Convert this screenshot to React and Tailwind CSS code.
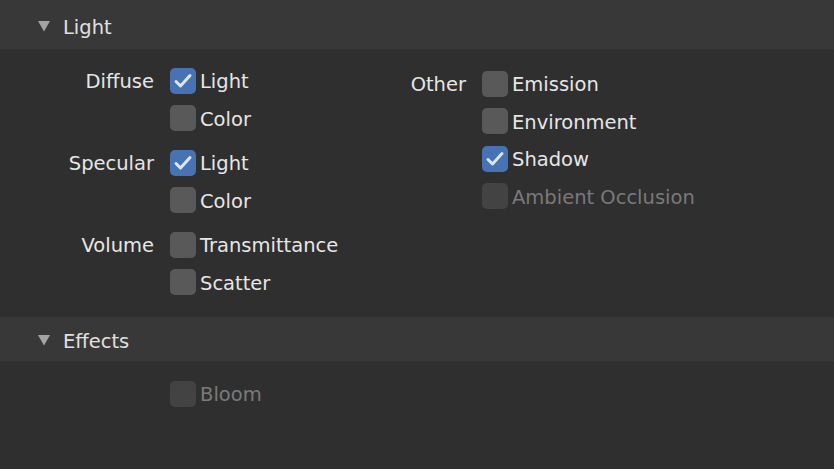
import React from "react";

function Check({ state }) {
    // state: "on" | "off" | "disabled"
    const bg =
        state === "on"
            ? "bg-[#4772b3]"
            : state === "disabled"
            ? "bg-[#434343]"
            : "bg-[#595959]";
    return (
        <div className={`w-[26px] h-[26px] rounded-[5px] shrink-0 flex items-center justify-center ${bg}`}>
            {state === "on" && (
                <svg width="26" height="26" viewBox="0 0 26 26">
                    <path
                        d="M6 13.5 L10.5 18 L20 7.5"
                        fill="none"
                        stroke="#dde5f1"
                        strokeWidth="3"
                        strokeLinecap="round"
                        strokeLinejoin="round"
                    />
                </svg>
            )}
        </div>
    );
}

function Row({ label, text, state = "off", labelWidth, gapTop = false }) {
    return (
        <div className={`flex items-center h-[37.5px] ${gapTop ? "mt-[7px]" : ""}`}>
            <div className="text-right pr-[16px] pt-[2px] text-[#e6e6e6]" style={{ width: labelWidth }}>
                {label}
            </div>
            <Check state={state} />
            <div className={`ml-[4px] pt-[2px] ${state === "disabled" ? "text-[#7a7a7a]" : "text-[#e6e6e6]"}`}>
                {text}
            </div>
        </div>
    );
}

function Header({ title, className }) {
    return (
        <div className={`flex items-center bg-[#383838] ${className}`}>
            <svg width="12" height="11" viewBox="0 0 12 11" className="ml-[38px] mr-[13px]">
                <path d="M0 0 L12 0 L6 10.5 Z" fill="#a3a3a3" />
            </svg>
            <span className="text-[#e0e0e0] pt-[2px]">{title}</span>
        </div>
    );
}

export default function App() {
    return (
        <div className="w-[834px] h-[469px] overflow-hidden bg-[#2f2f2f] font-['DejaVu_Sans',sans-serif] text-[19.5px] leading-none">
            <Header title="Light" className="h-[49px] pt-[4px]" />
            <div className="h-[268px] flex">
                <div className="w-[400px] pt-[13px]">
                    <Row label="Diffuse" text="Light" state="on" labelWidth={170} />
                    <Row label="" text="Color" labelWidth={170} />
                    <Row label="Specular" text="Light" state="on" labelWidth={170} gapTop />
                    <Row label="" text="Color" labelWidth={170} />
                    <Row label="Volume" text="Transmittance" labelWidth={170} gapTop />
                    <Row label="" text="Scatter" labelWidth={170} />
                </div>
                <div className="pt-[16px]">
                    <Row label="Other" text="Emission" labelWidth={82} />
                    <Row label="" text="Environment" labelWidth={82} />
                    <Row label="" text="Shadow" state="on" labelWidth={82} />
                    <Row label="" text="Ambient Occlusion" state="disabled" labelWidth={82} />
                </div>
            </div>
            <Header title="Effects" className="h-[44px] pt-[3px]" />
            <div className="pt-[14px]">
                <Row label="" text="Bloom" state="disabled" labelWidth={170} />
            </div>
        </div>
    );
}
